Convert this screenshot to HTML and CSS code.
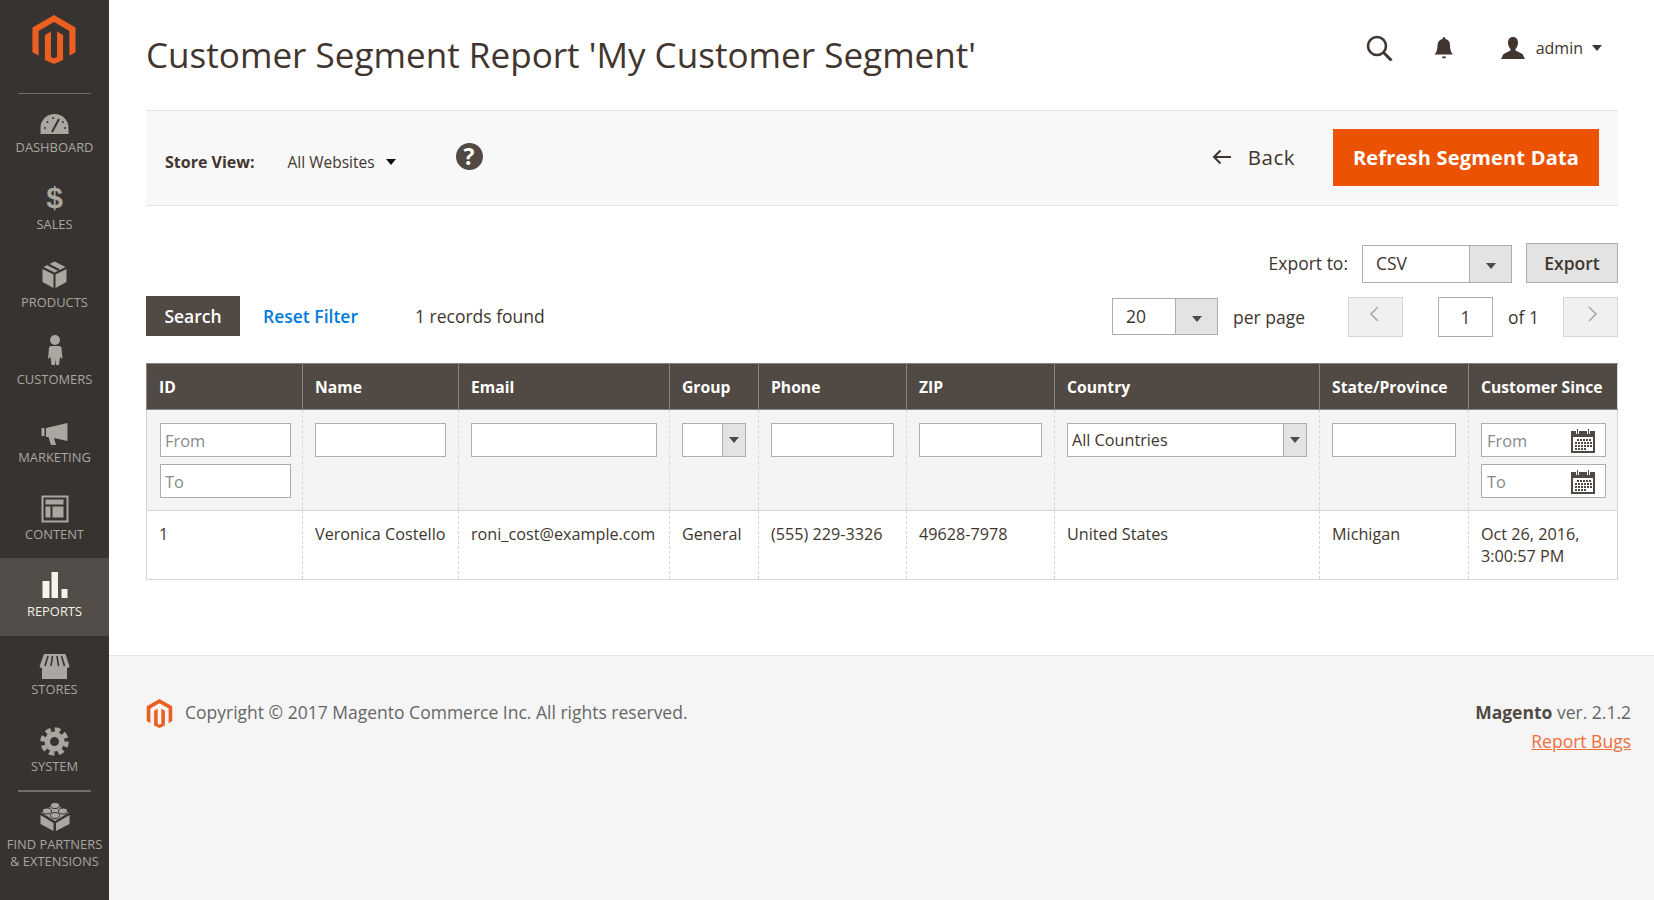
FILE: index.html
```html
<!DOCTYPE html>
<html>
<head>
  <meta charset="utf-8" />
  <title>Customer Segment Report</title>
  <link rel="stylesheet" href="styles.css">
</head>
<body>
  <div id="sidebar">
    <div class="logo">
      <svg width="44" height="49" viewBox="0 0 44 50"><path fill="#eb5f20" d="M22 0L0 12.7v25.4l6.3 3.6V16.3L22 7.2l15.7 9.1v25.4l6.3-3.6V12.7L22 0zm3.1 16.8v25.8L22 44.4l-3.1-1.8V16.8l-6.2 3.6v25.5L22 50l9.3-4.1V20.4l-6.2-3.6z"/></svg>
    </div>
    <a class="item">
      <svg class="icon" viewBox="0 0 40 38"><path fill="#aaa6a0" d="M5.500 32v-6a14 14 0 0 1 28 0v6z"/><path stroke="#373330" stroke-width="2" d="M17 30l7-13"/><g fill="#373330"><circle cx="10" cy="26" r="1"/><circle cx="12.500" cy="20" r="1"/><circle cx="18" cy="16" r="1"/><circle cx="28" cy="20" r="1"/><circle cx="30" cy="26" r="1"/></g></svg>
      <span>Dashboard</span>
    </a>
    <a class="item">
      <span class="dollar">$</span>
      <span>Sales</span>
    </a>
    <a class="item">
      <svg class="icon" viewBox="0 0 40 38"><g fill="#aaa6a0"><path d="M7.500 12l11 5.500V31l-11-6z"/><path d="M20.500 17.500l11-5.500v13l-11 6z"/><path d="M8.500 10l11-5.500 11 5.500-11 5.500z"/></g><path stroke="#373330" stroke-width="2" d="M13 7.500l11 5.500"/></svg>
      <span>Products</span>
    </a>
    <a class="item">
      <svg class="icon" viewBox="0 0 40 38"><g fill="#aaa6a0"><circle cx="20" cy="6" r="5"/><path d="M14 14q0-2 3-2h6.500q3 0 3 2l1 11-2.500-2-1 8h-3l-.5-6-.5 6h-3.500l-1-8-2.500 2z"/></g></svg>
      <span>Customers</span>
    </a>
    <a class="item">
      <svg class="icon" viewBox="0 0 40 38"><path fill="#aaa6a0" d="M6.500 16h3v8h-3zM11 16l21.500-5v18L19 26l2 7h-5l-2.500-8H11z"/></svg>
      <span>Marketing</span>
    </a>
    <a class="item">
      <svg class="icon" viewBox="0 0 40 38"><g fill="#aaa6a0"><path d="M6.500 6.500h27v27h-27zm2 2v23h23v-23z" fill-rule="evenodd"/><path d="M10.500 10.500h18v5h-18zM10.500 17.500h5v11h-5zM17.500 17.500h11v11h-11z"/></g></svg>
      <span>Content</span>
    </a>
    <a class="item active">
      <svg class="icon" viewBox="0 0 40 38"><path fill="#f7f3eb" d="M7.500 15h7v17h-7zM16.500 6H23v26h-6.500zM26.500 23h6v9h-6z"/></svg>
      <span>Reports</span>
    </a>
    <a class="item">
      <svg class="icon" viewBox="0 0 40 38"><path fill="#aaa6a0" d="M9 10h21.500l4 12.500-1.500 1.500h-1V35H7V24H6l-1.500-1.500z"/><path stroke="#373330" stroke-width="1.600" d="M13 12l-3 10M17.500 12l-1.500 10M22 12l1.500 10M26.500 12l3 10"/></svg>
      <span>Stores</span>
    </a>
    <a class="item">
      <svg class="icon" viewBox="0 0 40 38"><circle cx="19.500" cy="20.600" r="10" fill="#aaa6a0"/><circle cx="19.500" cy="20.600" r="12" fill="none" stroke="#aaa6a0" stroke-width="4.500" stroke-dasharray="5.400 4.020"/><circle cx="19.500" cy="20.600" r="4.500" fill="#373330"/></svg>
      <span>System</span>
    </a>
    <a class="item partners">
      <svg class="icon" viewBox="0 0 40 38"><g fill="#aaa6a0"><path d="M5.500 17l13 8v8l-13-7z"/><path d="M21 25l13.500-8v9L21 33z"/><path d="M6 14.500L20 6l14 8.500L20 23z"/></g><g fill="#aaa6a0" stroke="#373330"><ellipse cx="20" cy="7.500" rx="4.500" ry="3"/><ellipse cx="12" cy="13" rx="4.500" ry="3"/><ellipse cx="28" cy="13" rx="4.500" ry="3"/><ellipse cx="20" cy="17.500" rx="4.500" ry="3"/></g></svg>
      <span>Find Partners<br>&amp; Extensions</span>
    </a>
  </div>

  <div id="main">
    <div class="page">
      <div class="page-head">
        <h1>Customer Segment Report 'My Customer Segment'</h1>
        <div class="head-actions">
          <svg class="search-ico" width="27" height="26" viewBox="0 0 27 26"><circle cx="11" cy="11" r="9" fill="none" stroke="#41362f" stroke-width="2.600"/><path stroke="#41362f" stroke-width="3" d="M17.500 17.500l8 8"/></svg>
          <svg class="bell-ico" width="20" height="22" viewBox="0 0 20 22"><path fill="#41362f" d="M10 0q1.500 0 1.500 2 4.500 1 4.500 6.500 0 6 3 9H.5q3-3 3-9Q3.500 3 8.500 2 8.500 0 10 0zM8 19.500h4Q12 21.500 10 21.500T8 19.500z"/></svg>
          <div class="user">
            <svg width="24" height="22" viewBox="0 0 24 22"><path fill="#41362f" d="M12 0c3.500 0 5 2.500 5 5.500 0 3-1.500 5.500-2.500 6.500v1.500l7 3.500 2.500 5H0l2.500-5 7-3.500V12C8.500 11 7 8.500 7 5.500 7 2.500 8.500 0 12 0z"/></svg>
            <span>admin</span>
            <i class="caret"></i>
          </div>
        </div>
      </div>

      <div class="toolbar">
        <b class="store-label">Store View:</b>
        <span class="store-value">All Websites</span>
        <i class="caret dark"></i>
        <span class="help">?</span>
        <div class="toolbar-right">
          <span class="back"><svg width="20" height="16" viewBox="0 0 20 16"><path fill="none" stroke="#41362f" stroke-width="2" d="M19 8H3M8.500 1.500L2 8l6.500 6.500"/></svg>Back</span>
          <button class="primary">Refresh Segment Data</button>
        </div>
      </div>

      <div class="export-row">
        <span class="export-label">Export to:</span>
        <div class="select export-select"><span>CSV</span><i class="arrow"></i></div>
        <button class="btn-export">Export</button>
      </div>

      <div class="pager-row">
        <button class="btn-search">Search</button>
        <a class="reset">Reset Filter</a>
        <span class="found">1 records found</span>
        <div class="pager">
          <div class="select perpage"><span>20</span><i class="arrow"></i></div>
          <span class="perpage-label">per page</span>
          <button class="page-btn prev"><svg width="12" height="18" viewBox="0 0 12 18"><path fill="none" stroke="#a8a8a8" stroke-width="1.600" d="M10 2L3 9l7 7"/></svg></button>
          <input class="page-input" value="1">
          <span class="of">of 1</span>
          <button class="page-btn next"><svg width="12" height="18" viewBox="0 0 12 18"><path fill="none" stroke="#a8a8a8" stroke-width="1.600" d="M2 2l7 7-7 7"/></svg></button>
        </div>
      </div>

      <table class="grid">
        <thead>
          <tr>
            <th class="c-id">ID</th>
            <th class="c-name">Name</th>
            <th class="c-email">Email</th>
            <th class="c-group">Group</th>
            <th class="c-phone">Phone</th>
            <th class="c-zip">ZIP</th>
            <th class="c-country">Country</th>
            <th class="c-state">State/Province</th>
            <th class="c-since">Customer Since</th>
          </tr>
        </thead>
        <tbody>
          <tr class="filters">
            <td>
              <input placeholder="From">
              <input placeholder="To">
            </td>
            <td><input></td>
            <td><input></td>
            <td><div class="select small"><span></span><i class="arrow"></i></div></td>
            <td><input></td>
            <td><input></td>
            <td><div class="select small"><span>All Countries</span><i class="arrow"></i></div></td>
            <td><input></td>
            <td>
              <div class="date"><input placeholder="From"><svg width="26" height="25" viewBox="0 0 26 25"><use href="#cal"/></svg></div>
              <div class="date"><input placeholder="To"><svg width="26" height="25" viewBox="0 0 26 25"><use href="#cal"/></svg></div>
            </td>
          </tr>
          <tr class="data">
            <td>1</td>
            <td>Veronica Costello</td>
            <td>roni_cost@example.com</td>
            <td>General</td>
            <td>(555) 229-3326</td>
            <td>49628-7978</td>
            <td>United States</td>
            <td>Michigan</td>
            <td>Oct 26, 2016, 3:00:57 PM</td>
          </tr>
        </tbody>
      </table>
    </div>

    <div class="footer">
      <svg width="27" height="29" viewBox="0 0 44 50"><path fill="#eb5f20" d="M22 0L0 12.700v25.400l6.300 3.600V16.300L22 7.200l15.700 9.100v25.400l6.300-3.600V12.700L22 0zm3.100 16.800v25.800L22 44.400l-3.100-1.800V16.800l-6.200 3.600v25.500L22 50l9.300-4.100V20.400l-6.200-3.600z"/></svg>
      <span class="copyright">Copyright © 2017 Magento Commerce Inc. All rights reserved.</span>
      <div class="version">
        <div><b>Magento</b> ver. 2.1.2</div>
        <a class="bugs">Report Bugs</a>
      </div>
    </div>
  </div>

  <svg class="defs" width="0" height="0">
    <symbol id="cal" viewBox="0 0 26 25">
      <path fill="#514943" d="M1 3h24v22H1z"/>
      <path fill="#fff" d="M3 9h20v14H3z"/>
      <path fill="#fff" d="M6 0h3v6H6zM17 0h3v6h-3z"/>
      <path fill="#514943" d="M7 1h1v5H7zM18 1h1v5h-1z"/>
      <path stroke="#514943" stroke-width="2" stroke-dasharray="2 1" d="M7 12h14M5 15h17M5 18h17M5 21h11"/>
    </symbol>
  </svg>
</body>
</html>
```

FILE: styles.css
```css
html, body {
  margin: 0;
  height: 100%;
}
body {
  display: flex;
  min-height: 900px;
  font-family: 'Open Sans', sans-serif;
  font-size: 16px;
  color: #41362f;
  background: #fff;
  overflow: hidden;
}
button, input {
  font-family: inherit;
  color: inherit;
}
.defs {
  display: none;
}

/* sidebar */
#sidebar {
  width: 109px;
  flex: none;
  background: #373330;
  color: #aaa6a0;
  font-size: 12.9px;
  text-transform: uppercase;
}
.logo {
  height: 93px;
  box-sizing: border-box;
  padding-top: 15px;
}
.logo::after, .partners::before {
  content: "";
  display: block;
  height: 1px;
  margin: 0 18px;
  background: #736d68;
}
.logo::after {
  margin-top: 29px;
}
.logo svg {
  display: block;
  margin-left: 32px;
}
.item {
  display: block;
  height: 77.4px;
  box-sizing: border-box;
  padding-top: 8px;
  line-height: 14px;
  text-align: center;
}
.item:first-of-type {
  margin-top: 1px;
}
.item .icon {
  display: block;
  width: 40px;
  height: 38px;
  margin: 0 auto;
}
.item.active {
  background: #524d49;
  color: #f7f3eb;
}
.dollar {
  display: block;
  height: 38px;
  font-family: 'Liberation Sans', sans-serif;
  font-weight: bold;
  font-size: 30px;
  line-height: 38px;
}
.partners {
  height: auto;
  margin-top: -1px;
  padding-top: 0;
  line-height: 17px;
}
.partners::before {
  height: 2px;
  margin-bottom: 6px;
}

/* main column */
#main {
  flex: 1;
  display: flex;
  flex-direction: column;
  min-width: 0;
}
.page {
  padding: 0 36px 0 37px;
}
.page-head {
  height: 110px;
  display: flex;
  align-items: center;
  justify-content: space-between;
}
h1 {
  margin: 0 0 2px 0;
  font-size: 35.1px;
  font-weight: 400;
}
.head-actions {
  display: flex;
  align-items: center;
  margin: 0 16px 14px 0;
}
.search-ico {
  margin-right: 41px;
}
.bell-ico {
  margin-right: 47px;
}
.user {
  display: flex;
  align-items: center;
}
.user span {
  margin: 0 9px 0 11px;
}
.caret {
  display: inline-block;
  width: 0;
  height: 0;
  border: 5.5px solid transparent;
  border-top: 6px solid #41362f;
  border-bottom: 0;
}
.caret.dark {
  border-top-color: #111;
}

/* store view bar */
.toolbar {
  height: 96px;
  box-sizing: border-box;
  display: flex;
  align-items: center;
  padding: 0 19px 0 19px;
  background: #f8f8f8;
  border-top: 1px solid #e3e3e3;
  border-bottom: 1px solid #e3e3e3;
}
.store-label {
  font-weight: 700;
  margin: 8px 33px 0 0;
}
.store-value {
  font-size: 15.5px;
  margin: 8px 11px 0 0;
}
.toolbar .caret {
  margin-top: 8px;
}
.help {
  width: 27px;
  height: 27px;
  margin: -3px 0 0 60px;
  border-radius: 50%;
  background: #514943;
  color: #fff;
  font-weight: 700;
  font-size: 23px;
  line-height: 27px;
  text-align: center;
}
.toolbar-right {
  margin: -2px 0 0 auto;
  display: flex;
  align-items: center;
}
.back {
  display: flex;
  align-items: center;
  gap: 16px;
  font-size: 20.5px;
  letter-spacing: 0.5px;
  margin-right: 38px;
}
.primary {
  width: 266px;
  height: 57px;
  border: none;
  background: #eb5202;
  color: #fff;
  font-size: 20px;
  font-weight: 700;
  letter-spacing: 0.2px;
}

/* export and pager rows */
.export-row {
  display: flex;
  justify-content: flex-end;
  align-items: center;
  margin-top: 37px;
  height: 40px;
}
.export-label {
  font-size: 17.5px;
  margin-right: 14px;
}
.select {
  display: flex;
  align-items: stretch;
  box-sizing: border-box;
  border: 1px solid #adadad;
  background: #fff;
}
.select span {
  flex: 1;
  padding-left: 13px;
}
.select .arrow {
  display: flex;
  align-items: center;
  justify-content: center;
  width: 41px;
  background: #e3e3e3;
  border-left: 1px solid #adadad;
}
.select .arrow::after {
  content: "";
  border: 5.5px solid transparent;
  border-top: 6px solid #514943;
  border-bottom: 0;
  margin-top: 4px;
}
.export-select {
  width: 150px;
  height: 38px;
  margin-top: 2px;
  margin-right: 14px;
  font-size: 17.5px;
  line-height: 35px;
}
.btn-export {
  width: 92px;
  height: 40px;
  border: 1px solid #adadad;
  background: #e3e3e3;
  font-size: 17.5px;
  font-weight: 600;
}
.pager-row {
  display: flex;
  align-items: center;
  margin-top: 12px;
  height: 41px;
  font-size: 17.5px;
}
.btn-search {
  width: 94px;
  height: 40px;
  border: none;
  background: #514943;
  color: #fff;
  font-size: 17.5px;
  font-weight: 600;
}
.reset {
  margin-left: 23px;
  color: #007bdb;
  font-weight: 600;
}
.found {
  margin-left: 57px;
}
.pager {
  margin: 2px 0 0 auto;
  display: flex;
  align-items: center;
}
.perpage {
  width: 106px;
  height: 37px;
  line-height: 35px;
}
.perpage-label {
  margin: 0 43px 0 15px;
}
.page-btn {
  display: flex;
  align-items: center;
  justify-content: center;
  width: 55px;
  height: 40px;
  padding: 0 0 6px 0;
  border: 1px solid #d6d6d6;
  background: #f0f0f0;
}
.page-btn.prev {
  padding-right: 4px;
}
.page-btn.next {
  padding-left: 4px;
}
.page-input {
  width: 55px;
  height: 40px;
  box-sizing: border-box;
  margin-left: 35px;
  border: 1px solid #adadad;
  text-align: center;
  font-size: 17.5px;
}
.of {
  margin: 0 24px 0 15px;
}

/* grid */
.grid {
  width: 1471px;
  margin-top: 27px;
  border-collapse: collapse;
  table-layout: fixed;
  border: 1px solid #d6d6d6;
  font-size: 16.2px;
}
.grid th {
  height: 46px;
  padding: 0 12px;
  box-sizing: border-box;
  text-align: left;
  white-space: nowrap;
  font-size: 15.7px;
  font-weight: 700;
  background: #514943;
  color: #fff;
  border-left: 1px solid #8a837e;
  border-top: 1px solid #8a837e;
  border-bottom: 1px solid #8a837e;
}
.c-id, .c-name { width: 156px; }
.c-email { width: 211px; }
.c-group { width: 89px; }
.c-phone, .c-zip { width: 148px; }
.c-country { width: 265px; }
.c-state { width: 149px; }
.c-since { width: 149px; }
.grid td {
  padding: 0 12px;
  vertical-align: top;
  border-left: 1px dashed #d6d6d6;
}
.filters td {
  height: 101px;
  padding-top: 13px;
  padding-bottom: 10px;
  box-sizing: border-box;
  background: #f4f4f4;
  border-bottom: 1px solid #d6d6d6;
}
.filters td:first-child {
  padding-left: 13px;
  padding-right: 11px;
}
.filters td:last-child {
  padding-right: 11px;
}
.filters input {
  display: block;
  width: 100%;
  height: 34px;
  box-sizing: border-box;
  padding: 0 4px;
  border: 1px solid #adadad;
  background: #fff;
  font-size: 16.4px;
}
.filters input + input {
  margin-top: 7px;
}
.filters input::placeholder {
  color: #8a8a8a;
}
.select.small {
  height: 34px;
  line-height: 32px;
}
.select.small span {
  padding-left: 4px;
}
.select.small .arrow {
  width: 22px;
}
.select.small .arrow::after {
  margin-top: 0;
}
.date {
  display: flex;
  align-items: center;
  height: 34px;
  box-sizing: border-box;
  padding-right: 9px;
  border: 1px solid #adadad;
  background: #fff;
}
.date + .date {
  margin-top: 7px;
}
.date input {
  flex: 1;
  min-width: 0;
  height: 32px;
  padding-left: 5px;
  border: none;
}
.data td {
  height: 69px;
  padding-top: 12px;
  padding-bottom: 0;
  box-sizing: border-box;
  line-height: 22px;
}

/* footer */
.footer {
  flex: 1;
  margin-top: 75px;
  padding: 43px 23px 0 37px;
  display: flex;
  align-items: flex-start;
  background: #f5f5f5;
  border-top: 1px solid #e3e3e3;
  font-size: 17.5px;
  color: #666;
}
.copyright {
  margin: 1px 0 0 12px;
}
.version {
  margin: -1px 0 0 auto;
  text-align: right;
  line-height: 28.5px;
}
.version b {
  font-weight: 700;
  color: #514943;
}
.bugs {
  color: #ef6c3b;
  text-decoration: underline;
}
```
